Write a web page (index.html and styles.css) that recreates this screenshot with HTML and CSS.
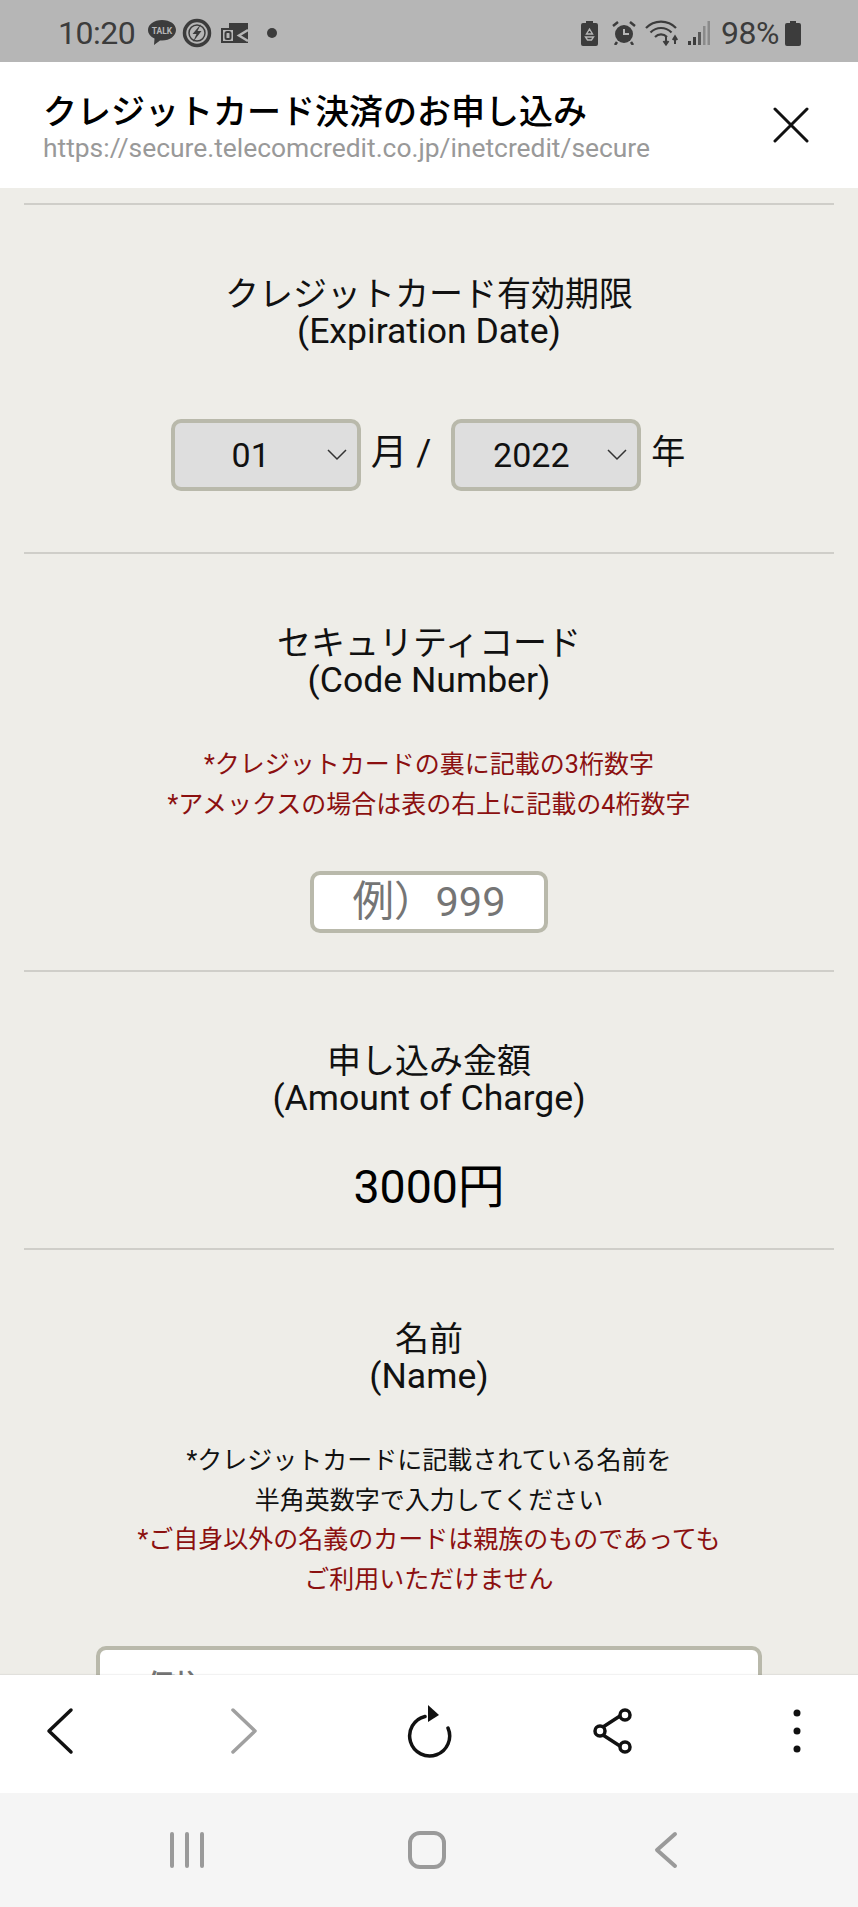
FILE: index.html
```html
<!DOCTYPE html>
<html>
<head>
  <meta charset="UTF-8">
  <title>クレジットカード決済のお申し込み</title>
  <link rel="stylesheet" href="styles.css">
</head>
<body>
  <div class="phone">

    <!-- Status bar -->
    <div class="status-bar">
      <div class="status-left">
        <span class="clock">10:20</span>
        <svg class="st-icon talk-icon" width="30" height="28" viewBox="0 0 30 28"><path d="M15 1C7 1 1 5.500 1 11c0 3.700 2.700 6.800 6.500 8.500L7 26l6-4.600c.7.100 1.300.1 2 .1 8 0 14-4.700 14-10.500S23 1 15 1z" fill="#3c3c3c"/><text x="15" y="14.500" class="talk">TALK</text></svg>
        <svg class="st-icon bolt-icon" width="30" height="30" viewBox="0 0 30 30"><circle cx="15" cy="15" r="12.500" fill="none" stroke="#3c3c3c" stroke-width="3.500"/><circle cx="15" cy="15" r="8" fill="none" stroke="#3c3c3c" stroke-width="1.500"/><path d="M19 6l-8.500 10h4L11 24l8.500-11h-4z" fill="#3c3c3c"/></svg>
        <svg class="st-icon mail-icon" width="28" height="20" viewBox="0 0 28 20"><path d="M8 0h19v20H8z" fill="#3c3c3c"/><path d="M27 7l-9 5.500L27 18" fill="none" stroke="#b6b6b6" stroke-width="2.500"/><rect x="1" y="6" width="12" height="13" fill="#b6b6b6" stroke="#3c3c3c" stroke-width="2"/><rect x="4.500" y="9" width="5" height="7" rx="1.500" fill="none" stroke="#3c3c3c" stroke-width="2"/></svg>
        <span class="dot"></span>
      </div>
      <div class="status-right">
        <svg class="st-icon" width="17" height="25" viewBox="0 0 17 25"><path d="M5 0h7v2h3a2 2 0 0 1 2 2v19a2 2 0 0 1-2 2H2a2 2 0 0 1-2-2V4a2 2 0 0 1 2-2h3z" fill="#3c3c3c"/><path d="M8.500 8l-3 5h6zM4.500 16h8l-2 3h-4z" fill="none" stroke="#b6b6b6" stroke-width="1.400"/></svg>
        <svg class="st-icon alarm" width="24" height="24" viewBox="0 0 24 24"><circle cx="12" cy="13" r="9" fill="#3c3c3c"/><path d="M12 8v5h5" fill="none" stroke="#b6b6b6" stroke-width="2"/><path d="M1 5l5-4M23 5l-5-4M5 21l-2 3M19 21l2 3" stroke="#3c3c3c" stroke-width="2.500"/></svg>
        <svg class="st-icon wifi" width="34" height="26" viewBox="0 0 34 26"><path d="M1 8c8-8.500 22-8.500 30 0M5.500 12.500c6-6 15-6 21 0M10 17c3.500-3.500 8.500-3.500 12 0" fill="none" stroke="#3c3c3c" stroke-width="2.200"/><path d="M21 16v8M18.500 21l2.500 3.500 2.500-3.500M30 24v-7M27.800 20l2.200-3.500 2.200 3.500" fill="none" stroke="#3c3c3c" stroke-width="2"/></svg>
        <svg class="st-icon signal" width="22" height="24" viewBox="0 0 22 24"><rect x="0" y="20" width="3" height="4" fill="#3c3c3c"/><rect x="5" y="16" width="3" height="8" fill="#3c3c3c"/><rect x="10" y="11" width="3" height="13" fill="#5a5a5a"/><rect x="15" y="5" width="2.500" height="19" fill="#8a8a8a"/><rect x="19.500" y="0" width="2.500" height="24" fill="#8a8a8a"/></svg>
        <span class="battery-text">98%</span>
        <svg class="st-icon" width="16" height="25" viewBox="0 0 16 25"><path d="M5 0h6v2h3a2 2 0 0 1 2 2v19a2 2 0 0 1-2 2H2a2 2 0 0 1-2-2V4a2 2 0 0 1 2-2h3z" fill="#3c3c3c"/></svg>
      </div>
    </div>

    <!-- Title header -->
    <div class="title-bar">
      <div class="title-text">
        <div class="title">クレジットカード決済のお申し込み</div>
        <div class="url">https://secure.telecomcredit.co.jp/inetcredit/secure</div>
      </div>
      <svg class="close-icon" width="36" height="36" viewBox="0 0 36 36"><path d="M2 2l32 32M34 2L2 34" stroke="#111" stroke-width="3" stroke-linecap="round"/></svg>
    </div>

    <!-- Form content -->
    <div class="content">
      <div class="section expiry">
        <div class="label">クレジットカード有効期限</div>
        <div class="label-en">(Expiration Date)</div>
        <div class="date-row">
          <div class="select"><span>01</span><svg width="20" height="12" viewBox="0 0 20 12"><path d="M1 1l9 9 9-9" fill="none" stroke="#333" stroke-width="1.500"/></svg></div>
          <span class="unit month">月 /</span>
          <div class="select"><span>2022</span><svg width="20" height="12" viewBox="0 0 20 12"><path d="M1 1l9 9 9-9" fill="none" stroke="#333" stroke-width="1.500"/></svg></div>
          <span class="unit">年</span>
        </div>
      </div>

      <div class="section code">
        <div class="label">セキュリティコード</div>
        <div class="label-en">(Code Number)</div>
        <div class="notes red">
          <p>*クレジットカードの裏に記載の3桁数字</p>
          <p>*アメックスの場合は表の右上に記載の4桁数字</p>
        </div>
        <div class="input code-input">例）999</div>
      </div>

      <div class="section amount">
        <div class="label">申し込み金額</div>
        <div class="label-en">(Amount of Charge)</div>
        <div class="price">3000円</div>
      </div>

      <div class="section name">
        <div class="label">名前</div>
        <div class="label-en">(Name)</div>
        <div class="notes">
          <p>*クレジットカードに記載されている名前を</p>
          <p>半角英数字で入力してください</p>
          <p class="red">*ご自身以外の名義のカードは親族のものであっても</p>
          <p class="red">ご利用いただけません</p>
        </div>
        <div class="input name-input">例）TARO YAMADA</div>
      </div>
    </div>

    <!-- Browser toolbar -->
    <div class="toolbar">
      <svg width="46" height="48" viewBox="0 0 46 48"><path d="M34 3L12 24l22 21" fill="none" stroke="#111" stroke-width="3.500" stroke-linecap="round" stroke-linejoin="round"/></svg>
      <svg width="46" height="48" viewBox="0 0 46 48"><path d="M12 3l22 21-22 21" fill="none" stroke="#a0a0a0" stroke-width="3.500" stroke-linecap="round" stroke-linejoin="round"/></svg>
      <svg width="46" height="54" viewBox="0 0 46 54"><path d="M19 12.500A20 20 0 1 0 42 24" fill="none" stroke="#111" stroke-width="3.500" stroke-linecap="round"/><path d="M22 1l11 10-11 7z" fill="#111"/></svg>
      <svg width="46" height="48" viewBox="0 0 46 48"><path d="M13 20l20-13M13 28l20 13" stroke="#111" stroke-width="3.500"/><circle cx="35" cy="8" r="5" fill="#fff" stroke="#111" stroke-width="3.500"/><circle cx="10" cy="24" r="5" fill="#fff" stroke="#111" stroke-width="3.500"/><circle cx="35" cy="40" r="5" fill="#fff" stroke="#111" stroke-width="3.500"/></svg>
      <svg width="46" height="46" viewBox="0 0 46 46"><circle cx="23" cy="5" r="3.500" fill="#111"/><circle cx="23" cy="23" r="3.500" fill="#111"/><circle cx="23" cy="41" r="3.500" fill="#111"/></svg>
    </div>

    <!-- Android nav bar -->
    <div class="nav-bar">
      <svg width="40" height="38" viewBox="0 0 40 38"><path d="M5 3v32M20 3v32M35 3v32" stroke="#9a9a9a" stroke-width="4" stroke-linecap="round"/></svg>
      <svg width="40" height="38" viewBox="0 0 40 38"><rect x="3" y="2" width="34" height="34" rx="10" fill="none" stroke="#9a9a9a" stroke-width="4"/></svg>
      <svg width="40" height="38" viewBox="0 0 40 38"><path d="M29 3L11 19l18 16" fill="none" stroke="#9a9a9a" stroke-width="4" stroke-linecap="round" stroke-linejoin="round"/></svg>
    </div>
  </div>
</body>
</html>
```

FILE: styles.css
```css
* {
  box-sizing: border-box;
}

html, body {
  margin: 0;
  padding: 0;
}

body {
  font-family: Roboto, "Noto Sans CJK JP", sans-serif;
  color: #111;
}

.phone {
  width: 858px;
  height: 1907px;
  display: flex;
  flex-direction: column;
  overflow: hidden;
}

/* Status bar */
.status-bar {
  height: 62px;
  flex: none;
  background-color: #b6b6b6;
  color: #3c3c3c;
  display: flex;
  justify-content: space-between;
  align-items: center;
  padding: 14px 57px 10px 58px;
}

.status-left, .status-right {
  display: flex;
  align-items: center;
}

.st-icon {
  display: block;
}

.talk-icon {
  margin-left: 12px;
}

.bolt-icon {
  margin-left: 5px;
}

.mail-icon {
  margin-left: 9px;
}

.status-right .alarm {
  margin-left: 14px;
}

.status-right .wifi {
  margin-left: 9px;
}

.status-right .signal {
  margin-left: 9px;
}

.clock, .battery-text {
  font-size: 32px;
  letter-spacing: -0.5px;
}

.battery-text {
  margin: 0 6px 0 11px;
}

.talk {
  font-family: Roboto, sans-serif;
  font-size: 8.5px;
  font-weight: 700;
  fill: #b6b6b6;
  text-anchor: middle;
}

.dot {
  width: 10px;
  height: 10px;
  margin-left: 18px;
  border-radius: 50%;
  background-color: #3c3c3c;
}

/* Title header */
.title-bar {
  height: 126px;
  flex: none;
  background-color: #fff;
  display: flex;
  justify-content: space-between;
  align-items: center;
  padding: 0 49px 0 43px;
}

.title {
  font-size: 34px;
  font-weight: 500;
  line-height: 46px;
  padding-top: 2px;
  margin-bottom: -2px;
  color: #000;
}

.url {
  font-size: 26.4px;
  line-height: 30px;
  color: #999;
}

/* Form content */
.content {
  flex: 1;
  min-height: 0;
  overflow: hidden;
  background-color: #eeede8;
  padding: 15px 24px 0;
}

.section {
  border-top: 2px solid #cfcec9;
  text-align: center;
}

.label {
  font-size: 34px;
  line-height: 38px;
}

.label-en {
  font-size: 35.6px;
  line-height: 36px;
}

.expiry {
  height: 349px;
  padding-top: 70px;
}

.date-row {
  display: flex;
  justify-content: center;
  align-items: center;
  margin-top: 70px;
  padding-right: 2px;
}

.select {
  width: 190px;
  height: 72px;
  display: flex;
  justify-content: space-between;
  align-items: center;
  padding: 0 10px 0 0;
  font-size: 34px;
  background-color: #dedede;
  border: 4px solid #b9b9ab;
  border-radius: 10px;
}

.select span {
  flex: 1;
  text-align: center;
}

.unit {
  font-size: 34px;
  margin: -12px 0 0 10px;
}

.unit.month {
  font-size: 36.5px;
  margin-right: 20px;
}

.code {
  height: 418px;
  padding-top: 70px;
}

.notes p {
  margin: 0;
  font-size: 25px;
  line-height: 39.5px;
}

.red {
  color: #8b1010;
}

.code .notes {
  margin-top: 47px;
}

.input {
  background-color: #fff;
  border: 4px solid #b9b9ab;
  border-radius: 10px;
  color: #757575;
}

.code-input {
  width: 238px;
  height: 62px;
  margin: 47px auto 0;
  font-size: 41.5px;
  line-height: 54px;
}

.amount {
  height: 278px;
  padding-top: 70px;
}

.price {
  font-size: 46.5px;
  margin-top: 41px;
  line-height: 60px;
  color: #000;
}

.name {
  padding-top: 70px;
}

.name .notes {
  margin-top: 47px;
}

.name-input {
  width: 666px;
  height: 92px;
  margin: 47px auto 0;
  padding-left: 44px;
  font-size: 41.5px;
  line-height: 84px;
  text-align: left;
}

/* Browser toolbar */
.toolbar {
  height: 118px;
  flex: none;
  background-color: #fff;
  display: flex;
  justify-content: space-between;
  align-items: center;
  padding: 0 38px 6px 37px;
  position: relative;
  box-shadow: 0 -1px 1px rgba(0, 0, 0, 0.05);
}

/* Android nav bar */
.nav-bar {
  height: 114px;
  flex: none;
  background-color: #f5f5f5;
  display: flex;
  justify-content: space-between;
  align-items: center;
  padding: 0 172px 0 167px;
}
```
